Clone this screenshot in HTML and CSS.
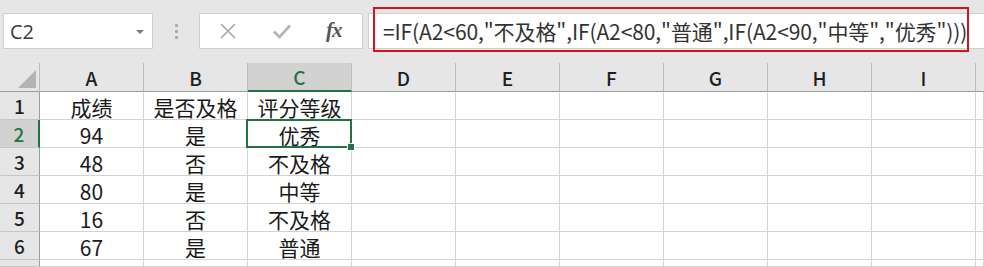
FILE: index.html
```html
<!DOCTYPE html>
<html lang="zh-CN">
<head>
<meta charset="utf-8">
<title>Excel</title>
<link rel="stylesheet" href="styles.css">
</head>
<body>
<div class="toolbar">
  <div class="namebox"><span class="ref">C2</span><span class="drop"></span></div>
  <div class="grip"><i></i><i></i><i></i></div>
  <div class="fnbox">
    <svg class="ico" width="18" height="18" viewBox="0 0 18 18"><path d="M2 2 L16 16 M16 2 L2 16" stroke="#a6a6a6" stroke-width="1.6" fill="none"/></svg>
    <svg class="ico" width="20" height="16" viewBox="0 0 20 16"><path d="M2 8.5 L7.5 14 L18 2.5" stroke="#b4b4b4" stroke-width="2.6" fill="none"/></svg>
    <span class="fx">fx</span>
  </div>
  <div class="formula">=IF(A2&lt;60,"不及格",IF(A2&lt;80,"普通",IF(A2&lt;90,"中等","优秀")))</div>
  <div class="mark"></div>
</div>
<div class="sheet">
  <div class="h corner"><span class="tri"></span></div>
  <div class="h col">A</div><div class="h col">B</div><div class="h col sel">C</div><div class="h col">D</div><div class="h col">E</div><div class="h col">F</div><div class="h col">G</div><div class="h col">H</div><div class="h col">I</div><div class="h col last"></div>

  <div class="h row">1</div><div class="c">成绩</div><div class="c">是否及格</div><div class="c">评分等级</div><div class="c"></div><div class="c"></div><div class="c"></div><div class="c"></div><div class="c"></div><div class="c"></div><div class="c"></div>
  <div class="h row rsel">2</div><div class="c">94</div><div class="c">是</div><div class="c active">优秀<span class="frame"></span><span class="handle"></span></div><div class="c"></div><div class="c"></div><div class="c"></div><div class="c"></div><div class="c"></div><div class="c"></div><div class="c"></div>
  <div class="h row">3</div><div class="c">48</div><div class="c">否</div><div class="c">不及格</div><div class="c"></div><div class="c"></div><div class="c"></div><div class="c"></div><div class="c"></div><div class="c"></div><div class="c"></div>
  <div class="h row">4</div><div class="c">80</div><div class="c">是</div><div class="c">中等</div><div class="c"></div><div class="c"></div><div class="c"></div><div class="c"></div><div class="c"></div><div class="c"></div><div class="c"></div>
  <div class="h row">5</div><div class="c">16</div><div class="c">否</div><div class="c">不及格</div><div class="c"></div><div class="c"></div><div class="c"></div><div class="c"></div><div class="c"></div><div class="c"></div><div class="c"></div>
  <div class="h row">6</div><div class="c">67</div><div class="c">是</div><div class="c">普通</div><div class="c"></div><div class="c"></div><div class="c"></div><div class="c"></div><div class="c"></div><div class="c"></div><div class="c"></div>
  <div class="h row"></div><div class="c"></div><div class="c"></div><div class="c"></div><div class="c"></div><div class="c"></div><div class="c"></div><div class="c"></div><div class="c"></div><div class="c"></div><div class="c"></div>
</div>
</body>
</html>
```
FILE: styles.css
```css
html, body {
  margin: 0;
  padding: 0;
}
body {
  width: 984px;
  height: 267px;
  overflow: hidden;
  background: #ffffff;
  font-family: "Noto Sans CJK SC", "Noto Sans", sans-serif;
  color: #222;
}
.toolbar {
  position: relative;
  height: 63px;
  box-sizing: border-box;
  background: #e6e6e6;
  display: flex;
  align-items: flex-start;
  padding: 13px 0 0 3px;
}
.namebox {
  width: 150px;
  height: 36px;
  box-sizing: border-box;
  background: #fff;
  border: 1px solid #cfcfcf;
  display: flex;
  align-items: center;
  justify-content: space-between;
  padding: 0 8px 0 6px;
}
.ref {
  font-family: "Open Sans", "Noto Sans", sans-serif;
  font-size: 20px;
  color: #3a3a3a;
  font-weight: 400;
}
.drop {
  width: 0;
  height: 0;
  border-left: 4px solid transparent;
  border-right: 4px solid transparent;
  border-top: 4px solid #7a7a7a;
  margin-top: 1px;
}
.grip {
  width: 46px;
  height: 36px;
  display: flex;
  flex-direction: column;
  align-items: center;
  justify-content: center;
  gap: 3px;
}
.grip i {
  width: 3px;
  height: 3px;
  background: #a8a8a8;
  border-radius: 1px;
}
.fnbox {
  width: 164px;
  height: 36px;
  box-sizing: border-box;
  background: #fff;
  border: 1px solid #cfcfcf;
  display: flex;
  align-items: center;
  padding-left: 19px;
  gap: 0;
}
.ico:first-child {
  margin-right: 35px;
}
.ico:nth-child(2) {
  margin-right: 34px;
}
.fx {
  font-family: "Liberation Serif", "DejaVu Serif", serif;
  font-style: italic;
  font-weight: bold;
  font-size: 21px;
  color: #555;
  letter-spacing: -1px;
  margin-top: -2px;
}
.formula {
  margin-left: 5px;
  flex: 1;
  height: 36px;
  box-sizing: border-box;
  background: #fff;
  border: 1px solid #cfcfcf;
  border-right: none;
  padding-left: 14px;
  display: flex;
  align-items: center;
  font-size: 21px;
  font-weight: 400;
  color: #333;
  letter-spacing: -0.1px;
  white-space: nowrap;
  overflow: hidden;
}
.mark {
  position: absolute;
  left: 373px;
  top: 7px;
  width: 596px;
  height: 45px;
  box-sizing: border-box;
  border: 2px solid #d4141c;
}
.sheet {
  display: grid;
  grid-template-columns: 40px repeat(9, 104px) 8px;
  grid-template-rows: 29px repeat(6, 28px) 7px;
  overflow: hidden;
}
.h {
  background: #e6e6e6;
  box-sizing: border-box;
  display: flex;
  align-items: center;
  justify-content: center;
  font-size: 19px;
  color: #1f1f1f;
}
.corner {
  position: relative;
  border-right: 1px solid #bdbdbd;
  border-bottom: 1px solid #9e9e9e;
}
.tri {
  position: absolute;
  right: 3px;
  bottom: 3px;
  width: 0;
  height: 0;
  border-left: 18px solid transparent;
  border-bottom: 18px solid #b4b4b4;
}
.col {
  border-right: 1px solid #bdbdbd;
  border-bottom: 1px solid #9e9e9e;
  font-weight: 500;
}
.col.sel {
  background: #d2d2d2;
  color: #217346;
  border-bottom: 2px solid #217346;
}
.col.last {
  border-right: none;
}
.row {
  border-right: 1px solid #9e9e9e;
  border-bottom: 1px solid #c6c6c6;
  font-weight: 500;
}
.row.rsel {
  background: #d2d2d2;
  color: #217346;
  border-right: 2px solid #217346;
}
.c {
  position: relative;
  box-sizing: border-box;
  border-right: 1px solid #d4d4d4;
  border-bottom: 1px solid #d4d4d4;
  display: flex;
  align-items: center;
  justify-content: center;
  font-size: 21px;
  font-weight: 400;
  color: #1a1a1a;
  padding-top: 2px;
}
.active .frame {
  position: absolute;
  left: -2px;
  top: -1px;
  right: -1px;
  bottom: -1px;
  border: 2px solid #217346;
}
.active .handle {
  position: absolute;
  right: -4px;
  bottom: -4px;
  width: 6px;
  height: 6px;
  background: #217346;
  border: 1px solid #fff;
  z-index: 2;
}
```
